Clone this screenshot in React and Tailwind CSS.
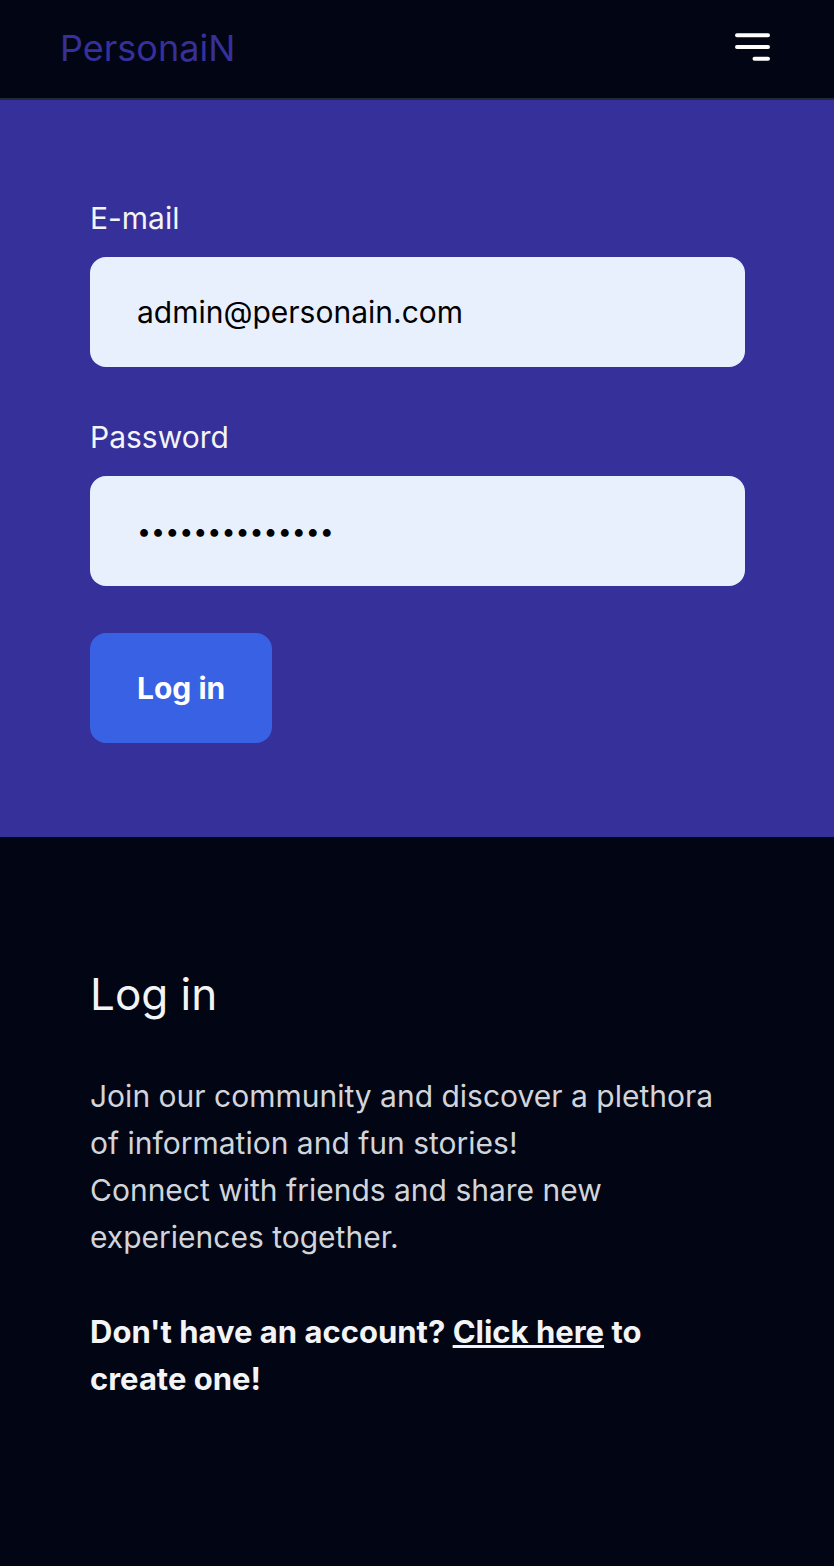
import React from "react";

function Header() {
  return (
    <header className="flex h-[100px] items-center justify-between border-b-2 border-[#1f2937] px-[60px]">
      <a href="#" className="pb-[2px] text-[36px] leading-[47px] text-[#36309b]">
        PersonaiN
      </a>
      <button type="button" aria-label="Open menu" className="mr-1 mb-1">
        <svg width="35" height="28" viewBox="0 0 35 28" fill="none" stroke="#fff" strokeWidth="4" strokeLinecap="round">
          <path d="M2 2.3H33M2 14H33M19.5 25.7H33" />
        </svg>
      </button>
    </header>
  );
}

function Field({ id, label, textSize, ...props }) {
  return (
    <div className="flex flex-col gap-[15px]">
      <label htmlFor={id} className="text-[#f3f4f6]">
        {label}
      </label>
      <input
        id={id}
        className={`h-[110px] w-full rounded-2xl bg-[#e8f0fe] px-[47px] text-black outline-none ${textSize}`}
        {...props}
      />
    </div>
  );
}

export default function App() {
  return (
    <div className="min-h-screen bg-[#020514] font-['Inter',sans-serif] text-[30px] leading-[47px]">
      <Header />
      <main>
        <form className="flex flex-col items-start gap-[47px] bg-[#36309b] pt-[95px] pr-[89px] pb-[94px] pl-[90px]">
          <div className="flex w-full flex-col gap-[47px]">
            <Field id="email" label="E-mail" type="email" textSize="text-[30px]" defaultValue="admin@personain.com" />
            <Field id="password" label="Password" type="password" textSize="text-[25px]" defaultValue="personain-pass" />
          </div>
          <button type="button" className="h-[110px] rounded-2xl bg-[#3861e4] px-[47px] font-bold text-white">
            Log in
          </button>
        </form>
        <section className="flex flex-col gap-[47px] pt-[126px] pr-[89px] pb-[125px] pl-[90px]">
          <h1 className="text-[44px] leading-[63px] text-[#f3f4f6]">Log in</h1>
          <p className="text-[#d1d5db]">
            Join our community and discover a plethora of information and fun stories!
            <br />
            Connect with friends and share new experiences together.
          </p>
          <p className="text-[31px] font-bold text-[#f3f4f6]">
            Don't have an account?{" "}
            <a href="#" className="underline">
              Click here
            </a>{" "}
            to create one!
          </p>
        </section>
      </main>
    </div>
  );
}
